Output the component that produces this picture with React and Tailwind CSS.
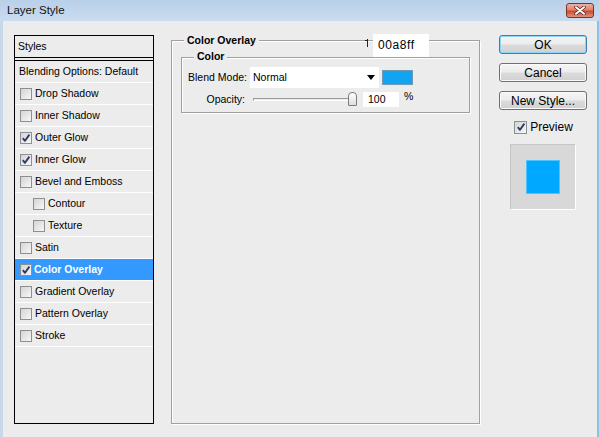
import React from "react";

const rows = [
  { label: "Blending Options: Default", plain: true },
  { label: "Drop Shadow" },
  { label: "Inner Shadow" },
  { label: "Outer Glow", checked: true },
  { label: "Inner Glow", checked: true },
  { label: "Bevel and Emboss" },
  { label: "Contour", indent: true },
  { label: "Texture", indent: true },
  { label: "Satin" },
  { label: "Color Overlay", checked: true, active: true },
  { label: "Gradient Overlay" },
  { label: "Pattern Overlay" },
  { label: "Stroke" },
];

function Check({ checked, big }) {
  return (
    <div
      className={
        (big ? "w-[13px] h-[13px] " : "w-[12px] h-[12px] ") +
        "shrink-0 border border-[#8e8f8f] bg-[linear-gradient(135deg,#d4d4d4,#f7f7f7)] flex items-center justify-center"
      }
    >
      {checked && (
        <svg width="10" height="10" viewBox="0 0 10 10">
          <path d="M1.8 5.2 L4 7.8 L8.4 1.6" fill="none" stroke="#2b3a68" strokeWidth="1.9" strokeLinejoin="round" />
        </svg>
      )}
    </div>
  );
}

function Button({ children, primary }) {
  return (
    <div
      className={
        "w-[88px] h-[19px] rounded-[3px] border flex items-center justify-center text-[12px] text-black bg-[linear-gradient(#f5f5f5_0%,#ececec_48%,#dcdcdc_52%,#d0d0d0_100%)] " +
        (primary
          ? "border-[#3c7fb1] shadow-[inset_0_0_0_1px_#8fd3f5]"
          : "border-[#707070] shadow-[inset_0_0_0_1px_#fbfbfb]")
      }
    >
      {children}
    </div>
  );
}

export default function App() {
  return (
    <div className="w-[599px] h-[437px] overflow-hidden flex flex-col bg-[#ececec] font-['Liberation_Sans',Arial,sans-serif] text-black">
      {/* Title bar */}
      <div className="h-[21px] shrink-0 flex items-center justify-between pl-[7px] pr-[5px] bg-[linear-gradient(#b9d0e9,#cadcef)]">
        <span className="text-[11.5px] text-[#111]">Layer Style</span>
        <div className="w-[28px] h-[15px] rounded-[3px] border border-[#7a3224] bg-[linear-gradient(#eeb2a3_0%,#e0826b_45%,#c94b33_55%,#e1937d_100%)] flex items-center justify-center">
          <svg width="12" height="9" viewBox="0 0 12 9">
            <path d="M2 1.2 L10 7.8 M10 1.2 L2 7.8" stroke="#5b2a22" strokeWidth="3.4" strokeLinecap="round" />
            <path d="M2 1.2 L10 7.8 M10 1.2 L2 7.8" stroke="#ffffff" strokeWidth="1.9" strokeLinecap="round" />
          </svg>
        </div>
      </div>

      {/* Body */}
      <div className="flex-1 flex border-l-[3px] border-l-[#c8d8ea] border-r-2 border-r-[#86c2ea] pl-[11px] pt-[14px]">
        {/* Styles list */}
        <div className="w-[140px] h-[389px] shrink-0 border border-black flex flex-col text-[10.5px]">
          <div className="h-[22px] shrink-0 flex items-center pl-[3px] border-b border-black">Styles</div>
          <div className="h-[2px] shrink-0" />
          <div className="shrink-0 border-t border-black" />
          {rows.map((r) => (
            <div
              key={r.label}
              className={
                "h-[22px] shrink-0 flex items-center border-b border-white " +
                (r.plain ? "pl-[3px] " : r.indent ? "pl-[18px] gap-[2px] " : "pl-[5px] gap-[2px] ") +
                (r.active ? "bg-[#3399ff] text-white font-bold" : "")
              }
            >
              {!r.plain && <Check checked={r.checked} />}
              <span className={r.active ? "pl-0" : "pl-px"}>{r.label}</span>
            </div>
          ))}
        </div>

        {/* Color Overlay group */}
        <div className="relative ml-[17px] mt-[5px] w-[309px] h-[384px] shrink-0 border border-[#a0a0a0] shadow-[inset_1px_1px_0_#fff,1px_1px_0_#fff] pl-[9px] pt-[16px] text-[10.5px]">
          <div className="absolute left-[12px] top-[-8px] h-[14px] leading-[14px] px-[3px] bg-[#ececec] font-bold">
            Color Overlay
          </div>
          <svg className="absolute left-[192px] top-[-2px]" width="6" height="8" viewBox="0 0 6 8">
            <path d="M3.5 0 V8 M1 1.5 H3.5" stroke="#222" strokeWidth="1" fill="none" />
          </svg>
          <div className="absolute left-[201px] top-[-7px] w-[56px] h-[25px] bg-white pl-[5px] pt-[4px] text-[12px] tracking-[0.6px] leading-[14px]">
            00a8ff
          </div>

          {/* Color inner group */}
          <div className="relative w-[289px] h-[56px] border border-[#a0a0a0] shadow-[inset_1px_1px_0_#fff,1px_1px_0_#fff] pl-[5px] pt-[9px] flex flex-col gap-[4px]">
            <div className="absolute left-[12px] top-[-9px] h-[14px] leading-[14px] px-[3px] bg-[#ececec] font-bold">
              Color
            </div>
            <div className="flex items-center">
              <div className="w-[60px] text-right">Blend Mode:</div>
              <div className="ml-[3px] w-[129px] h-[21px] bg-white flex items-center justify-between pl-[3px] pr-[4px]">
                <span>Normal</span>
                <svg width="8" height="5" viewBox="0 0 8 5">
                  <polygon points="0,0 8,0 4,5" fill="#000" />
                </svg>
              </div>
              <div className="ml-[3px] w-[31px] h-[15px] bg-[#12a4f0] border border-[#6f9ab8]" />
            </div>
            <div className="flex items-center">
              <div className="w-[58px] text-right">Opacity:</div>
              <div className="relative ml-[5px] w-[109px] h-[15px] flex items-center">
                <div className="ml-[3px] w-[103px] h-[3px] border-t border-[#9a9a9a] border-b border-b-white border-l border-l-[#9a9a9a]" />
                <div className="absolute left-[98px] top-0 w-[9px] h-[14px] rounded-t-[4px] rounded-b-[1px] border border-[#7b7b7b] bg-[linear-gradient(#ffffff,#dedede)]" />
              </div>
              <div className="ml-[4px] w-[36px] h-[15px] bg-white pl-[5px] flex items-center">100</div>
              <div className="ml-[5px] self-start mt-[-3px]">%</div>
            </div>
          </div>
        </div>

        {/* Right column */}
        <div className="ml-[19px] w-[88px] shrink-0 flex flex-col items-center">
          <div className="flex flex-col gap-[9px]">
            <Button primary>OK</Button>
            <Button>Cancel</Button>
            <Button>New Style...</Button>
          </div>
          <div className="mt-[8px] flex items-center gap-[3px] pl-[1px]">
            <Check checked big />
            <span className="text-[12px]">Preview</span>
          </div>
          <div className="mt-[8px] w-[66px] h-[66px] bg-[#d8d8d8] border border-[#c6c6c6] border-r-white border-b-white flex items-center justify-center">
            <div className="w-[34px] h-[34px] bg-[#00a8ff] border border-[#4cc6ff]" />
          </div>
        </div>
      </div>
    </div>
  );
}
